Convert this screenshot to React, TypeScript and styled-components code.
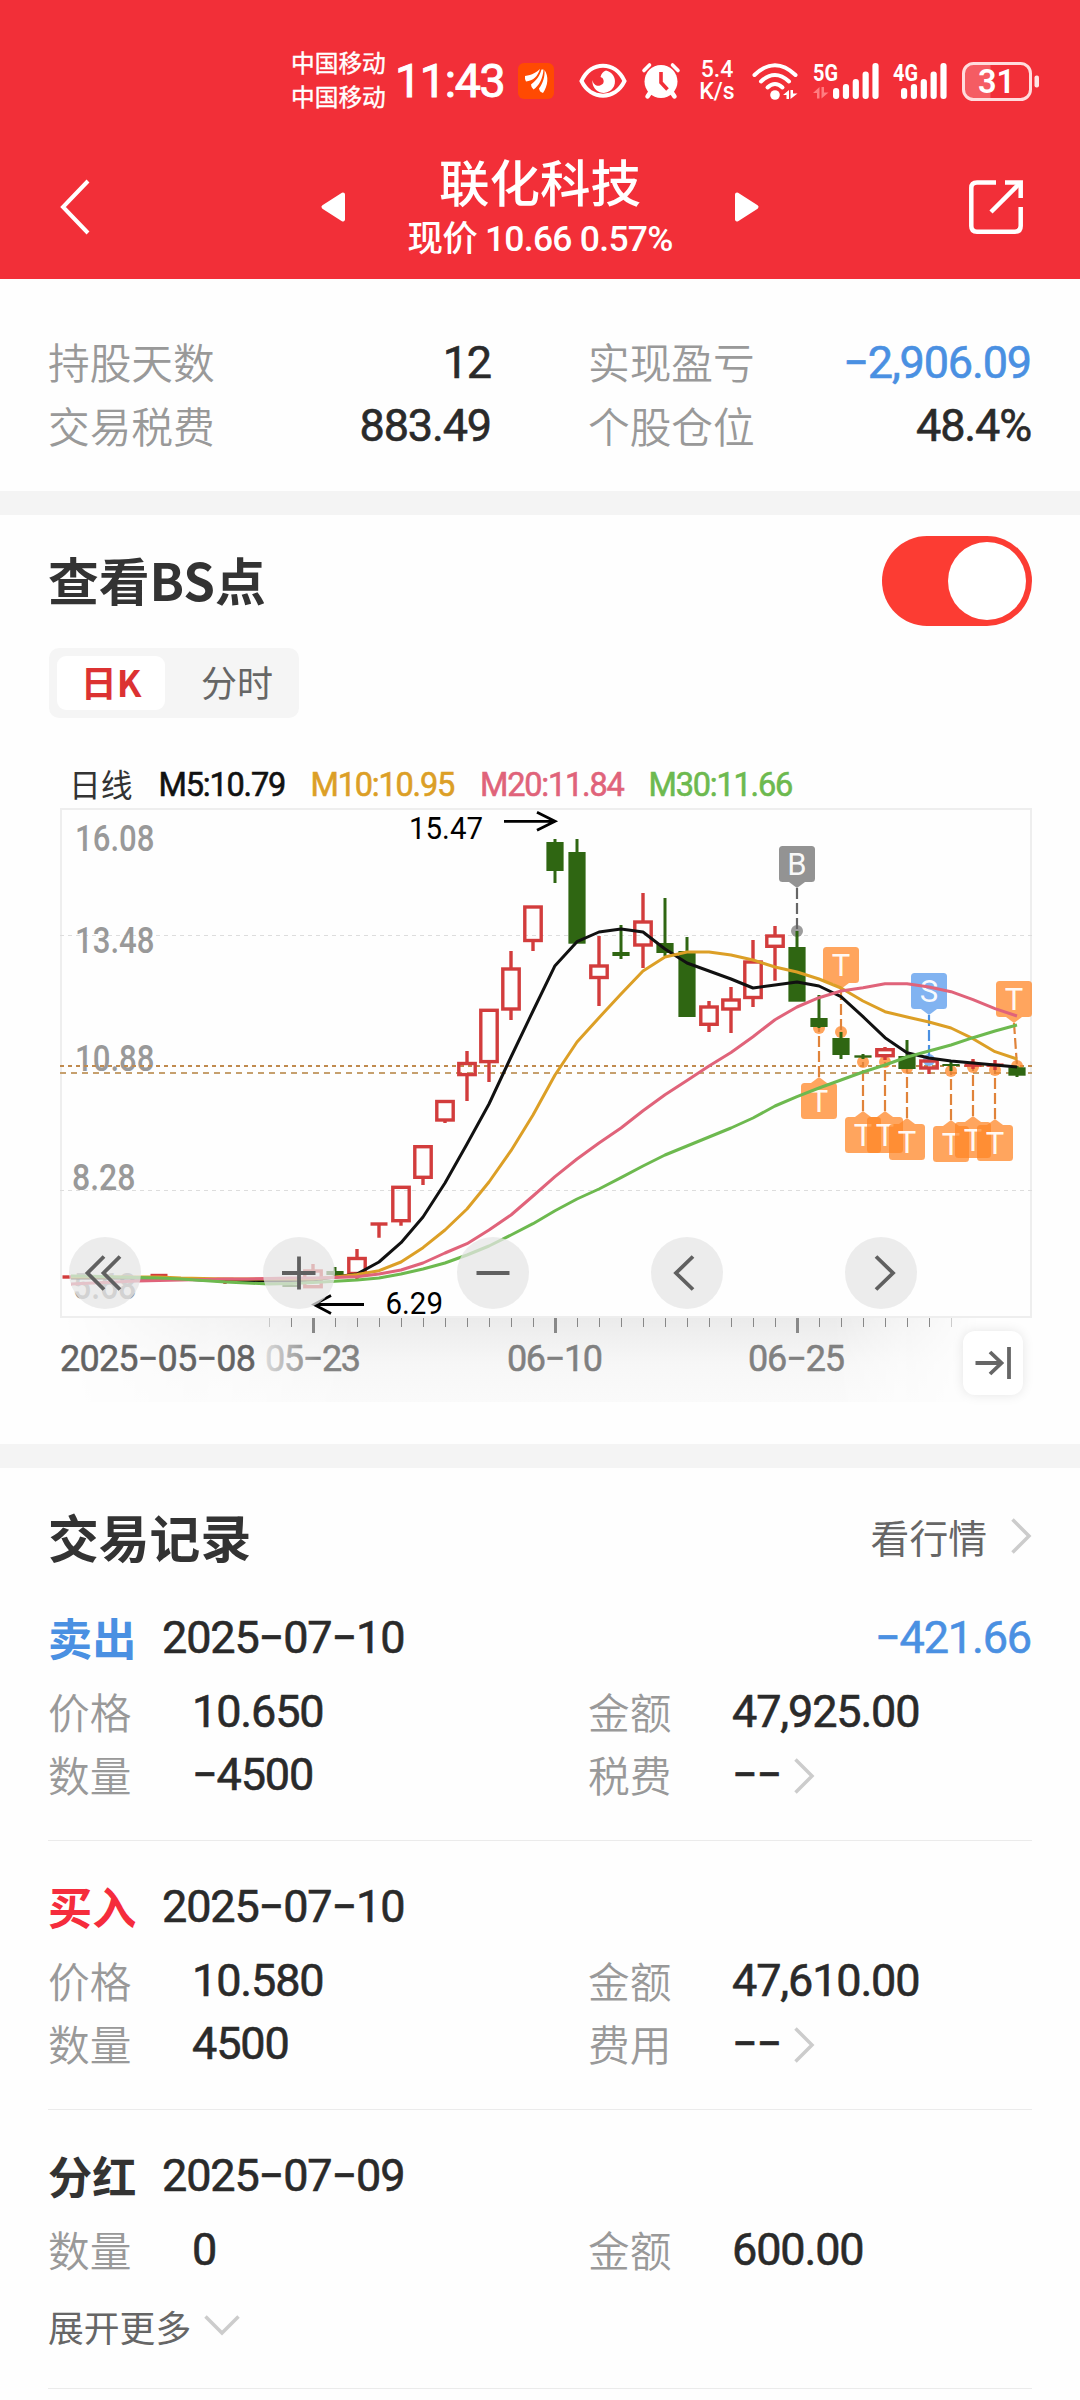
import React from "react";
import styled, { createGlobalStyle } from "styled-components";

const NUM = `Roboto, "Noto Sans CJK SC", sans-serif`;
const CJK = `"Noto Sans CJK SC", Roboto, sans-serif`;

const GlobalStyle = createGlobalStyle`
  * { box-sizing: border-box; }
  body { margin: 0; background: #fff; font-family: ${NUM}; }
  svg { display: block; flex: none; overflow: visible; }
`;

const Page = styled.div`
  width: 1080px;
  height: 2400px;
  overflow: hidden;
  background: #fefefe;
  display: flex;
  flex-direction: column;
`;

/* ---------- header ---------- */

const Header = styled.header`
  height: 279px;
  flex: none;
  background: #f22f38;
  color: #fff;
`;

const StatusBar = styled.div`
  height: 135px;
  padding: 27px 0 0 291px;
  display: flex;
  align-items: flex-start;
`;

const Slot = styled.div<{ $ml: number; $w: number }>`
  margin-left: ${(p) => p.$ml}px;
  width: ${(p) => p.$w}px;
  height: 108px;
  flex: none;
  display: flex;
  align-items: center;
  white-space: nowrap;
`;

const Carriers = styled.div`
  font: 400 23.7px/34px ${CJK};
  -webkit-text-stroke: 0.4px currentColor;
  width: 96px;
  padding-top: 18px;
  height: 103px;
`;

const Clock = styled.span`
  font: 400 46.5px/108px ${NUM};
  -webkit-text-stroke: 1px currentColor;
  letter-spacing: -1.3px;
`;

const Speed = styled.div`
  font: 500 23px/22.5px ${NUM};
  text-align: center;
  width: 100%;
`;

const NavBar = styled.div`
  height: 144px;
  padding: 0 57px 0 60px;
  display: grid;
  grid-template-columns: 51px 1fr 54px;
  align-items: center;
`;

const StockSwitcher = styled.div`
  display: flex;
  align-items: center;
  justify-content: space-between;
  width: 438px;
  justify-self: center;
`;

const StockTitle = styled.div`
  padding-top: 3px;
  text-align: center;
`;

const StockName = styled.h1`
  margin: 0;
  font: 500 50.5px/60px ${CJK};
  height: 62px;
`;

const StockPrice = styled.div`
  font: 500 35.5px/55px ${NUM};
  letter-spacing: -0.75px;
`;

/* ---------- summary ---------- */

const Summary = styled.section`
  height: 212px;
  padding: 50.5px 49px 0 48px;
  display: grid;
  grid-template-columns: 443px 443px;
  grid-auto-rows: 63.5px;
  column-gap: 97px;
`;

const SummaryCell = styled.div`
  display: flex;
  justify-content: space-between;
  align-items: center;
`;

const Label = styled.span`
  font: 350 41.7px/62px ${CJK};
  color: #999;
`;

const Value = styled.span<{ $blue?: boolean }>`
  font: 400 45px/60px ${NUM};
  -webkit-text-stroke: 0.6px currentColor;
  letter-spacing: -1.15px;
  padding-top: 3px;
  color: ${(p) => (p.$blue ? "#4a90e2" : "#2a2a2a")};
`;

const Band = styled.div`
  height: 24px;
  flex: none;
  background: #f4f4f4;
`;

/* ---------- chart section ---------- */

const ChartSection = styled.section`
  height: 929px;
  flex: none;
  padding-top: 21px;
`;

const SectionHead = styled.div`
  height: 90px;
  padding: 0 48px 0 48px;
  display: flex;
  align-items: center;
  justify-content: space-between;
`;

const SectionTitle = styled.h2`
  margin: 0;
  padding-bottom: 4px;
  font: 700 50.8px/60px ${CJK};
  color: #333;
`;

const Toggle = styled.button`
  width: 150px;
  height: 90px;
  border: 0;
  border-radius: 45px;
  padding: 6px;
  background: #fc3c33;
  display: flex;
  justify-content: flex-end;
`;

const Knob = styled.span`
  width: 78px;
  height: 78px;
  border-radius: 50%;
  background: #fff;
`;

const Tabs = styled.div`
  margin: 22px 0 0 49px;
  width: 250px;
  height: 70px;
  padding: 8px;
  border-radius: 10px;
  background: #f5f5f5;
  display: flex;
  justify-content: space-between;
`;

const Tab = styled.button<{ $active?: boolean }>`
  width: 108px;
  height: 54px;
  border: 0;
  padding: 0 0 3px;
  border-radius: 9px;
  background: ${(p) => (p.$active ? "#fff" : "transparent")};
  color: ${(p) => (p.$active ? "#dc3232" : "#666")};
  font: ${(p) => (p.$active ? 700 : 400)} 36px/51px ${CJK};
`;

const Legend = styled.div`
  margin-top: 46px;
  height: 40px;
  padding-left: 69px;
  display: flex;
  align-items: center;
`;

const LegendItem = styled.span<{ $c: string; $w: number }>`
  width: ${(p) => p.$w}px;
  flex: none;
  white-space: nowrap;
  color: ${(p) => p.$c};
  font: 400 32.5px/38px ${NUM};
  -webkit-text-stroke: 0.6px currentColor;
  padding-top: 2px;
  letter-spacing: -1.2px;
`;

const LegendName = styled.span`
  width: 89.5px;
  color: #333;
  font: 400 31.8px/38px ${CJK};
  padding-bottom: 3px;
`;

const ChartBox = styled.div`
  position: relative;
  height: 626px;
`;

const Controls = styled.div`
  position: absolute;
  left: 69px;
  top: 433px;
  display: flex;
  gap: 122px;
`;

const RoundButton = styled.button`
  width: 72px;
  height: 72px;
  border: 0;
  padding: 0;
  border-radius: 50%;
  background: rgba(229, 229, 229, 0.74);
`;

const JumpButton = styled.button`
  position: absolute;
  left: 963px;
  top: 527px;
  width: 60px;
  height: 64px;
  border: 0;
  padding: 0;
  border-radius: 12px;
  background: #fff;
  box-shadow: 0 0 12px rgba(0, 0, 0, 0.1);
`;

/* ---------- records ---------- */

const Records = styled.section`
  padding: 0 48px;
`;

const RecordsHead = styled.div`
  height: 104px;
  padding-top: 36px;
  display: flex;
  align-items: center;
  justify-content: space-between;
`;

const MoreLink = styled.a`
  display: flex;
  align-items: center;
  gap: 24px;
  color: #666;
  font: 400 38.8px/60px ${CJK};
  padding-bottom: 5px;
`;

const Record = styled.article`
  height: 269px;
  padding-top: 33px;
  border-bottom: 1px solid #ebebeb;
`;

const LastRecord = styled(Record)`
  height: 279px;
`;

const RecordHead = styled.div`
  height: 63px;
  display: flex;
  align-items: center;
`;

const Kind = styled.strong<{ $c: string }>`
  width: 114px;
  color: ${(p) => p.$c};
  font: 700 44.2px/60px ${CJK};
`;

const Profit = styled(Value)`
  margin-left: auto;
  margin-right: 1px;
`;

const Fields = styled.div`
  margin-top: 11px;
  display: grid;
  grid-template-columns: 540px 1fr;
  grid-auto-rows: 63px;
`;

const Field = styled.div`
  display: grid;
  grid-template-columns: 144px auto auto 1fr;
  align-items: center;
`;

const FieldChevron = styled.span`
  margin-left: 13px;
  padding-top: 4px;
`;

const Expand = styled.button`
  margin-top: 14px;
  height: 63px;
  border: 0;
  padding: 0;
  background: none;
  display: flex;
  align-items: center;
  gap: 13px;
  color: #666;
  font: 400 35.8px/60px ${CJK};
`;

/* ---------- icons ---------- */

const AppBadge = () => (
  <svg width="36" height="36" viewBox="0 0 36 36">
    <rect width="36" height="36" rx="6" fill="#ff4a02" />
    <g fill="#fff">
      <path d="M7 13 C14 12 19 9 22 6 C20 13 15 18 8 18.500 Q6.500 16 7 13Z" />
      <path d="M13 21.500 C19 17 22 12 23.500 6.500 L25.500 6.500 C25 15 21 23 15.500 26.500 Q13 24.500 13 21.500Z" />
      <path d="M21 25.500 C25 20 27 14 26.500 7 C31 13 30 23 25 30 Q21.500 29 21 25.500Z" />
    </g>
  </svg>
);

const EyeIcon = () => (
  <svg width="48" height="36" viewBox="0 0 48 36">
    <path d="M2.500 18 C12 -2.500 36 -2.500 45.500 18 C36 37.500 12 37.500 2.500 18Z" fill="none" stroke="#fff" strokeWidth="4" />
    <path d="M27 7.500 A11.300 11.300 0 1 1 13.500 17 C14 21.500 18 23.500 21 22.500 Q25.500 21 24.500 17 Q24 14.500 21.500 14 Q22.500 9 27 7.500Z" fill="#fff" />
  </svg>
);

const AlarmIcon = () => (
  <svg width="38" height="36" viewBox="0 0 38 36">
    <g stroke="#fff" strokeLinecap="round" fill="none">
      <path d="M2 7.500 L7.500 2 M36 7.500 L30.500 2" strokeWidth="3.600" />
      <path d="M8.500 29 L5.500 33.500 M29.500 29 L32.500 33.500" strokeWidth="4.500" />
    </g>
    <circle cx="19" cy="18.500" r="16.500" fill="#fff" />
    <path d="M19 9 V19.500 L25.500 26.500" fill="none" stroke="#f22f38" strokeWidth="3.600" />
  </svg>
);

const WifiIcon = () => (
  <svg width="47" height="37" viewBox="0 0 47 37">
    <g fill="none" stroke="#fff" strokeWidth="4" strokeLinecap="round">
      <path d="M2.500 12 Q23 -7.500 43.500 12" />
      <path d="M9 18.500 Q23 5.500 37 18.500" />
      <path d="M15.500 24.500 Q23 17.500 30.500 24.500" />
    </g>
    <circle cx="23" cy="32" r="4.800" fill="#fff" />
    <path d="M31 32 L37 27 V36 H34.500 V32Z M38.500 27 H41 V30.500 H45.500 L38.500 36Z" fill="#fff" />
  </svg>
);

const Signal = ({ label, x, width, arrows }: { label: string; x: number; width: number; arrows?: boolean }) => (
  <svg width={width} height="38" viewBox={`0 0 ${width} 38`}>
    <text x="0" y="19" fontFamily="Roboto, sans-serif" fontWeight="700" fontSize="24.500" fill="#fff" textLength="25" lengthAdjust="spacingAndGlyphs">
      {label}
    </text>
    {arrows && <path d="M0 31 L6.500 25 V36.500 H4 V31Z M8.500 25 H11 V30.500 H15.500 L8.500 36.500Z" fill="#ff7d80" />}
    {[26, 22, 17, 9.5, 1].map((top, i) => (
      <rect key={top} x={x + i * 9.85} y={top} width="6.200" height={37 - top} rx="3" fill="#fff" />
    ))}
  </svg>
);

const Battery = () => (
  <svg width="77" height="39" viewBox="0 0 77 39">
    <path d="M28.500 2 H12 Q2 2 2 12 V27 Q2 37 12 37 H28.500Z" fill="#fff" fillOpacity="0.220" />
    <rect x="1.500" y="1.500" width="67" height="36" rx="10" fill="none" stroke="#ffdcdd" strokeWidth="3" />
    <rect x="72.500" y="13.500" width="4.500" height="12" rx="2" fill="#ffe4e4" />
    <text x="34.500" y="31" textAnchor="middle" fontFamily="Roboto, sans-serif" fontWeight="600" fontSize="32.500" fill="#fff">
      31
    </text>
  </svg>
);

const BackIcon = () => (
  <svg width="32" height="56" viewBox="0 0 32 56">
    <path d="M28 2 L3 28 L28 54" fill="none" stroke="#fff" strokeWidth="4" />
  </svg>
);

const Triangle = ({ flip }: { flip?: boolean }) => (
  <svg width="24" height="30" viewBox="0 0 24 30">
    <path
      d="M22 2.500 L2.500 15 L22 27.500Z"
      fill="#fff"
      stroke="#fff"
      strokeWidth="4"
      strokeLinejoin="round"
      transform={flip ? "translate(24 0) scale(-1 1)" : undefined}
    />
  </svg>
);

const ShareIcon = () => (
  <svg width="54" height="54" viewBox="0 0 54 54">
    <g fill="none" stroke="#fff" strokeWidth="4.500">
      <path d="M27 2.500 H8 Q2.300 2.500 2.300 8 V46 Q2.300 51.700 8 51.700 H46 Q51.700 51.700 51.700 46 V27" />
      <path d="M36 2.500 H51.700 V18" />
      <path d="M51 3 L22 32" />
    </g>
  </svg>
);

const ChevronRight = () => (
  <svg width="21" height="36" viewBox="0 0 21 36">
    <path d="M1.500 1.500 L18 18 L1.500 34.500" fill="none" stroke="#ccc" strokeWidth="3.500" />
  </svg>
);

const ChevronDown = () => (
  <svg width="36" height="21" viewBox="0 0 36 21">
    <path d="M1.500 1.500 L18 18 L34.500 1.500" fill="none" stroke="#ccc" strokeWidth="3.500" />
  </svg>
);

/* ---------- chart ---------- */

type Candle = [x: number, top: number, bottom: number, high: number, low: number];

const RED: Candle[] = [
  [71, 1276.5, 1277.5, 1276, 1278],
  [159, 1275, 1276, 1275, 1276],
  [225, 1279, 1280, 1278, 1284],
  [313, 1271, 1286.7, 1264, 1287],
  [357, 1258.5, 1273.5, 1249, 1281],
  [379, 1223.8, 1224.2, 1223, 1237.7],
  [401, 1187.3, 1220.7, 1187, 1225.7],
  [423, 1146.7, 1177.3, 1146, 1185],
  [445, 1101.5, 1120, 1101, 1123],
  [467, 1063.5, 1074.6, 1051, 1101],
  [489, 1010.3, 1061.6, 1010, 1082],
  [511, 969, 1009, 951, 1020],
  [533, 907, 940.5, 907, 951],
  [599, 966, 977.5, 936, 1006],
  [643, 922, 945, 893, 968],
  [709, 1007, 1024.3, 1001, 1032],
  [731, 1000, 1009, 987, 1033],
  [753, 962, 997.5, 940, 1007],
  [775, 936, 946.3, 926, 980.7],
  [885, 1049.7, 1055.7, 1047, 1060],
  [929, 1061, 1068, 1060, 1074],
  [973, 1064.3, 1066, 1059, 1069],
  [995, 1064.3, 1066, 1060, 1070],
];

const GREEN: Candle[] = [
  [291, 1285, 1287, 1284, 1287],
  [335, 1271, 1275, 1267, 1277],
  [555, 842, 871, 839, 883],
  [577, 852, 943.7, 839, 943],
  [621, 952, 956, 925, 959],
  [665, 943, 953, 898, 956],
  [687, 951, 1017, 937, 1017],
  [797, 947, 1001.7, 931, 1001],
  [819, 1018, 1027, 995, 1028],
  [841, 1038, 1055, 1032, 1059],
  [863, 1055.3, 1057.7, 1054, 1059],
  [907, 1056, 1069, 1040, 1069],
  [951, 1064, 1066, 1062, 1071],
  [1017, 1067.3, 1075.7, 1066, 1077],
];

const STEP = 22;
const fromX = (x0: number, ys: number[]) => ys.map((y, i) => `${x0 + i * STEP},${y}`).join(" ");

const M5 = fromX(71, [
  1278, 1278, 1278, 1278, 1278, 1279, 1280, 1281, 1280.5, 1281, 1281, 1280, 1277, 1274, 1262, 1242.7, 1217, 1183, 1144, 1104,
  1057, 1011, 965.7, 941.7, 932, 929, 932, 949, 963, 971, 979, 988, 985, 982, 986, 996.7, 1016.7, 1037.7, 1052.7, 1058,
  1061, 1063, 1065, 1067,
]);
const M10 = fromX(71, [
  1277, 1277, 1277, 1277, 1277, 1278, 1278.5, 1279, 1279, 1279, 1279, 1279, 1277, 1274.5, 1270.7, 1262, 1247.7, 1230, 1209, 1182,
  1150.7, 1115, 1075, 1042, 1017.7, 994, 971, 957, 952, 952, 955, 960, 967, 972, 979, 988, 1001, 1011.7, 1017, 1022,
  1028, 1038.7, 1051.7, 1059,
]);
const M20 = fromX(71, [
  1284, 1283, 1282, 1281, 1280.5, 1280, 1279.5, 1279, 1279, 1278.5, 1278, 1278, 1277.5, 1276.7, 1274, 1270, 1263, 1253, 1243.7, 1230,
  1215, 1196, 1176.7, 1159, 1143, 1128, 1110.7, 1094.7, 1080.5, 1066, 1052.5, 1036.7, 1019.7, 1007, 997.7, 991, 987.7, 983.7, 983.7, 987,
  991.7, 999.7, 1008.7, 1016,
]);
const M30 = fromX(71, [
  1276, 1276.3, 1277, 1277.5, 1278, 1279, 1280.5, 1282, 1283, 1284, 1283.5, 1282.5, 1281.3, 1280, 1278, 1274, 1269, 1263, 1255, 1246,
  1235, 1223.7, 1210.7, 1199, 1189, 1177.7, 1166, 1155, 1146, 1137, 1128, 1118, 1106, 1096.7, 1088, 1080, 1072, 1065, 1057, 1051,
  1045, 1037.7, 1031, 1025,
]);

type MarkProps = { x: number; top: number; dot: number; kind: "B" | "S" | "T"; tagX?: number };

const MARK_FILL = { B: "#7b7b7b", S: "#5598ec", T: "#ff8526" };
const MARK_LINE = { B: "#666", S: "#4a90e2", T: "#e0833a" };

const MARKS: MarkProps[] = [
  { x: 797, top: 846, dot: 931, kind: "B" },
  { x: 819, top: 1083, dot: 1028, kind: "T" },
  { x: 841, top: 947, dot: 1032, kind: "T" },
  { x: 863, top: 1117, dot: 1062, kind: "T" },
  { x: 885, top: 1117, dot: 1062, kind: "T" },
  { x: 907, top: 1124, dot: 1068, kind: "T" },
  { x: 929, top: 973, dot: 1060, kind: "S" },
  { x: 951, top: 1126, dot: 1071, kind: "T" },
  { x: 973, top: 1122, dot: 1067, kind: "T" },
  { x: 995, top: 1125, dot: 1070, kind: "T" },
  { x: 1017, top: 981, dot: 1066, kind: "T", tagX: 1014 },
];

const Mark = ({ x, top, dot, kind, tagX = x }: MarkProps) => {
  const below = top > dot;
  const edge = below ? top : top + 36;
  const tip = below ? top - 6 : top + 42;
  return (
    <g>
      <circle cx={x} cy={dot} r="6" fill={MARK_FILL[kind]} fillOpacity="0.750" />
      <line x1={tagX} y1={tip} x2={x} y2={dot} stroke={MARK_LINE[kind]} strokeWidth="2.200" strokeDasharray="11 4" />
      <g fill={MARK_FILL[kind]} fillOpacity={kind === "B" ? 0.82 : 0.74}>
        <rect x={tagX - 18} y={top} width="36" height="36" rx="3.500" />
        <path d={`M${tagX - 8} ${edge} H${tagX + 8} L${tagX} ${tip}Z`} />
      </g>
      <text x={tagX} y={top + 29} textAnchor="middle" fontSize="31" fontWeight="400" fill="#fff" fillOpacity="0.950">
        {kind}
      </text>
    </g>
  );
};

const Price = ({ x, y, w, children }: { x: number; y: number; w: number; children: string }) => (
  <text x={x} y={y} textLength={w} lengthAdjust="spacingAndGlyphs" fontSize="36" fontWeight="500" fill="#999">
    {children}
  </text>
);

const TICKS = Array.from({ length: 32 }, (_, i) => 269 + i * STEP);
const MAJOR = [313, 555, 797];

const KChart = () => (
  <svg width="1080" height="626" viewBox="0 804 1080 626" fontFamily={NUM}>
    <defs>
      <linearGradient id="axisShade" x1="0" y1="0" x2="0" y2="1">
        <stop offset="0" stopColor="#ebebeb" />
        <stop offset="0.550" stopColor="#f7f7f7" />
        <stop offset="1" stopColor="#fafafa" />
      </linearGradient>
      <linearGradient id="axisFade" x1="61" x2="980" y1="0" y2="0" gradientUnits="userSpaceOnUse">
        <stop offset="0" stopColor="#000" />
        <stop offset="0.320" stopColor="#fff" />
        <stop offset="0.840" stopColor="#fff" />
        <stop offset="1" stopColor="#000" />
      </linearGradient>
      <mask id="axisMask">
        <rect x="61" y="1310" width="970" height="100" fill="url(#axisFade)" />
      </mask>
      <linearGradient id="dateFade" x1="262" x2="318" y1="0" y2="0" gradientUnits="userSpaceOnUse">
        <stop offset="0" stopColor="#e0e0e0" />
        <stop offset="1" stopColor="#828282" />
      </linearGradient>
    </defs>

    <rect x="61" y="1318" width="970" height="84" fill="url(#axisShade)" mask="url(#axisMask)" />
    <rect x="61" y="809" width="970" height="508" fill="none" stroke="#eee" strokeWidth="2" />
    <g stroke="#ddd" strokeDasharray="4 4">
      <line x1="60" x2="1032" y1="935.500" y2="935.500" />
      <line x1="60" x2="1032" y1="1190.500" y2="1190.500" />
    </g>

    <Price x={75} y={851} w={79.5}>16.08</Price>
    <Price x={75} y={953} w={79.5}>13.48</Price>
    <Price x={75} y={1071} w={79.5}>10.88</Price>
    <Price x={72} y={1190} w={63.5}>8.28</Price>
    <Price x={73} y={1299} w={63.5}>5.68</Price>

    <line x1="60" x2="1032" y1="1066" y2="1066" stroke="#c08a4e" strokeWidth="2" strokeDasharray="4 4" />
    <line x1="60" x2="1032" y1="1073" y2="1073" stroke="#c6a06e" strokeWidth="2" strokeDasharray="6 5" />

    {MARKS.map((m) => (
      <Mark key={m.x} {...m} />
    ))}

    {RED.map(([x, t, b, h, l]) => (
      <g key={x} stroke="#d23c3c" strokeWidth="3.400" fill="none">
        <path d={`M${x} ${h} V${t} M${x} ${b} V${l}`} />
        {b - t < 3 ? <path d={`M${x - 8.5} ${(t + b) / 2} H${x + 8.5}`} /> : <rect x={x - 8.2} y={t} width="16.400" height={b - t} />}
      </g>
    ))}
    {GREEN.map(([x, t, b, h, l]) => (
      <g key={x} fill="#2f6612">
        <rect x={x - 1.5} y={h} width="3" height={l - h} />
        <rect x={x - 8.6} y={t} width="17.200" height={b - t} />
      </g>
    ))}

    <g fill="none" strokeWidth="3" strokeLinejoin="round">
      <polyline points={M5} stroke="#111" />
      <polyline points={M10} stroke="#dc9f26" />
      <polyline points={M20} stroke="#e0637a" />
      <polyline points={M30} stroke="#6db94f" />
    </g>

    <g fontSize="30.500" fill="#000">
      <text x="409" y="839" textLength="74" lengthAdjust="spacingAndGlyphs">15.47</text>
      <text x="385.500" y="1314" textLength="57.500" lengthAdjust="spacingAndGlyphs">6.29</text>
    </g>
    <g stroke="#000" strokeWidth="2.800" fill="none">
      <path d="M504 821.300 H555 M537 812.300 L555 821.300 L537 830.300" />
      <path d="M364 1304.500 H314 M331 1295.500 L314 1304.500 L331 1313.500" />
    </g>

    {TICKS.map((x) =>
      MAJOR.includes(x) ? (
        <rect key={x} x={x - 1} y="1318" width="3" height="15" fill="#888" />
      ) : (
        <rect key={x} x={x} y="1318" width="1" height="9" fill="#888" opacity={x < 280 || x > 940 ? 0.4 : 1} />
      )
    )}
    <g fontSize="36" fill="#808080" strokeWidth="0.500">
      <text x="60" y="1371" textLength="196" fill="#636363" stroke="#636363">2025−05−08</text>
      <text x="265" y="1371" textLength="96" fill="url(#dateFade)" stroke="url(#dateFade)">05−23</text>
      <text x="507" y="1371" textLength="96" stroke="#808080">06−10</text>
      <text x="748" y="1371" textLength="97" stroke="#808080">06−25</text>
    </g>
  </svg>
);

const CONTROL_PATHS = [
  "M35 19.500 L18.500 36 L35 52.500 M51 19.500 L34.500 36 L51 52.500",
  "M19 36 H52.500 M36 19.500 V52.500",
  "M19.500 36 H52.500",
  "M42 19.500 L25 36 L42 52.500",
  "M31 19.500 L48 36 L31 52.500",
];

type FieldData = { label: string; value: string; link?: boolean };

const FieldRow = ({ label, value, link }: FieldData) => (
  <Field>
    <Label>{label}</Label>
    <Value>{value}</Value>
    {link && (
      <FieldChevron>
        <ChevronRight />
      </FieldChevron>
    )}
  </Field>
);

const App = () => (
  <>
    <GlobalStyle />
    <Page>
      <Header>
        <StatusBar>
          <Carriers>
            <div>中国移动</div>
            <div>中国移动</div>
          </Carriers>
          <Slot $ml={8} $w={123}>
            <Clock>11:43</Clock>
          </Slot>
          <Slot $ml={0} $w={36}><AppBadge /></Slot>
          <Slot $ml={25} $w={48}><EyeIcon /></Slot>
          <Slot $ml={15} $w={38}><AlarmIcon /></Slot>
          <Slot $ml={17} $w={40}>
            <Speed>
              <div>5.4</div>
              <div>K/s</div>
            </Speed>
          </Slot>
          <Slot $ml={15} $w={47}><WifiIcon /></Slot>
          <Slot $ml={14} $w={66}><Signal label="5G" x={20} width={66} arrows /></Slot>
          <Slot $ml={14} $w={54}><Signal label="4G" x={8} width={54} /></Slot>
          <Slot $ml={14.5} $w={77}><Battery /></Slot>
        </StatusBar>
        <NavBar>
          <BackIcon />
          <StockSwitcher>
            <Triangle />
            <StockTitle>
              <StockName>联化科技</StockName>
              <StockPrice>现价 10.66 0.57%</StockPrice>
            </StockTitle>
            <Triangle flip />
          </StockSwitcher>
          <ShareIcon />
        </NavBar>
      </Header>

      <Summary>
        <SummaryCell><Label>持股天数</Label><Value>12</Value></SummaryCell>
        <SummaryCell><Label>实现盈亏</Label><Value $blue>−2,906.09</Value></SummaryCell>
        <SummaryCell><Label>交易税费</Label><Value>883.49</Value></SummaryCell>
        <SummaryCell><Label>个股仓位</Label><Value>48.4%</Value></SummaryCell>
      </Summary>
      <Band />

      <ChartSection>
        <SectionHead>
          <SectionTitle>查看BS点</SectionTitle>
          <Toggle><Knob /></Toggle>
        </SectionHead>
        <Tabs>
          <Tab $active>日K</Tab>
          <Tab>分时</Tab>
        </Tabs>
        <Legend>
          <LegendName>日线</LegendName>
          <LegendItem $c="#111" $w={152}>M5:10.79</LegendItem>
          <LegendItem $c="#dc9f26" $w={169.5}>M10:10.95</LegendItem>
          <LegendItem $c="#e0637a" $w={168.5}>M20:11.84</LegendItem>
          <LegendItem $c="#6db94f" $w={160}>M30:11.66</LegendItem>
        </Legend>
        <ChartBox>
          <KChart />
          <Controls>
            {CONTROL_PATHS.map((d) => (
              <RoundButton key={d}>
                <svg width="72" height="72" viewBox="0 0 72 72">
                  <path d={d} fill="none" stroke="#606060" strokeWidth="3.800" />
                </svg>
              </RoundButton>
            ))}
          </Controls>
          <JumpButton>
            <svg width="60" height="64" viewBox="0 0 60 64">
              <path d="M12.500 32 H38 M27 21 L38.500 32 L27 43 M46 16 V48" fill="none" stroke="#666" strokeWidth="3.800" />
            </svg>
          </JumpButton>
        </ChartBox>
      </ChartSection>
      <Band />

      <Records>
        <RecordsHead>
          <SectionTitle>交易记录</SectionTitle>
          <MoreLink>看行情<ChevronRight /></MoreLink>
        </RecordsHead>
        <Record>
          <RecordHead>
            <Kind $c="#4a90e2">卖出</Kind>
            <Value>2025−07−10</Value>
            <Profit $blue>−421.66</Profit>
          </RecordHead>
          <Fields>
            <FieldRow label="价格" value="10.650" />
            <FieldRow label="金额" value="47,925.00" />
            <FieldRow label="数量" value="−4500" />
            <FieldRow label="税费" value="−−" link />
          </Fields>
        </Record>
        <Record>
          <RecordHead>
            <Kind $c="#f52c3c">买入</Kind>
            <Value>2025−07−10</Value>
          </RecordHead>
          <Fields>
            <FieldRow label="价格" value="10.580" />
            <FieldRow label="金额" value="47,610.00" />
            <FieldRow label="数量" value="4500" />
            <FieldRow label="费用" value="−−" link />
          </Fields>
        </Record>
        <LastRecord>
          <RecordHead>
            <Kind $c="#333">分红</Kind>
            <Value>2025−07−09</Value>
          </RecordHead>
          <Fields>
            <FieldRow label="数量" value="0" />
            <FieldRow label="金额" value="600.00" />
          </Fields>
          <Expand>展开更多<ChevronDown /></Expand>
        </LastRecord>
      </Records>
    </Page>
  </>
);

export default App;
